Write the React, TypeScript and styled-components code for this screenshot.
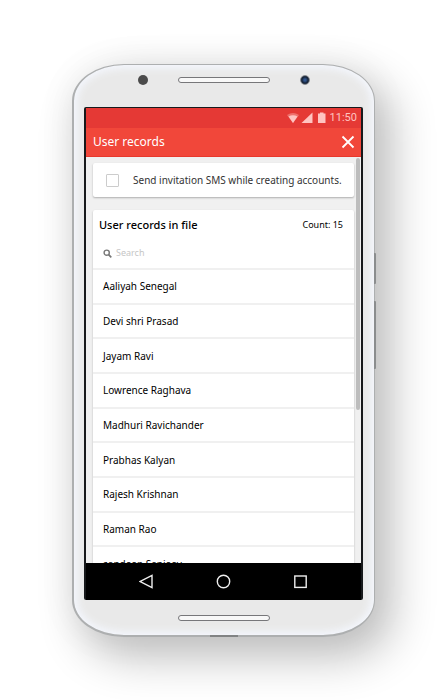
import React from "react";
import styled, { createGlobalStyle } from "styled-components";

const GlobalStyle = createGlobalStyle`
  *, *::before, *::after { box-sizing: border-box; }
  body {
    margin: 0;
    background: #fff;
    font-family: "Noto Sans", "Open Sans", sans-serif;
  }
  button, input { font: inherit; }
`;

const Stage = styled.main`
  min-height: 100vh;
  padding: 64px 73px 63px 72px;
  overflow: hidden;
`;

const Phone = styled.div`
  position: relative;
  display: flex;
  flex-direction: column;
  height: calc(100vh - 127px);
  min-height: 400px;
  padding: 0 11px 0 10px;
  border: 2px solid #adafb0;
  border-width: 1px 1px 2px 2px;
  border-radius: 52px / 37px;
  background: #e9e9e9;
  box-shadow:
    inset 0 0 9px 3px #f5f8ff,
    14px 18px 44px 4px rgba(0, 0, 0, 0.24),
    0 0 40px rgba(0, 0, 0, 0.05);
`;

const SideButton = styled.span<{ $top: number; $height: number }>`
  position: absolute;
  right: -2px;
  top: ${({ $top }) => $top}px;
  width: 2px;
  height: ${({ $height }) => $height}px;
  border-radius: 0 1px 1px 0;
  background: #8b8d8e;
`;

const Port = styled.span`
  position: absolute;
  bottom: -2px;
  left: 50%;
  width: 28px;
  height: 2px;
  margin-left: -14px;
  background: #818384;
`;

const TopBezel = styled.div`
  display: flex;
  flex: none;
  align-items: center;
  justify-content: center;
  gap: 30px;
  height: 42px;
  padding-bottom: 12px;
`;

const BottomBezel = styled(TopBezel)`
  height: 35px;
  padding: 0;
`;

const Grille = styled.span`
  width: 92px;
  height: 6px;
  border: 1px solid #77777a;
  border-radius: 3px;
  background: #f8f8f8;
`;

const Sensor = styled.span`
  width: 10px;
  height: 10px;
  border-radius: 50%;
  background: #4b4b4b;
`;

const Camera = styled(Sensor)`
  border: 1px solid #85888d;
  background: radial-gradient(circle, #31558c 0 1px, #16253c 3px, #333a44 5px);
`;

const Screen = styled.div`
  display: flex;
  flex: 1;
  flex-direction: column;
  min-height: 0;
  border: 2px solid #17191b;
  border-width: 1px 2px 0;
  border-radius: 2px;
  overflow: hidden;
  background: #f0f0f0;
`;

const StatusBar = styled.div`
  display: flex;
  flex: none;
  align-items: center;
  justify-content: flex-end;
  height: 20px;
  padding-right: 4px;
  background: #e53935;
  color: #ffc4c1;
  font: 11px/20px Roboto, sans-serif;
`;

const StatusIcons = styled.svg`
  width: 40px;
  height: 12px;
  margin-right: 3px;
`;

const Header = styled.header`
  display: flex;
  flex: none;
  align-items: center;
  justify-content: space-between;
  height: 29px;
  padding: 0 6px 0 7px;
  border-bottom: 1px solid #e8382c;
  background: #f1473a;
  color: #fff;
`;

const Title = styled.h1`
  margin: 0;
  font-size: 12px;
  font-weight: 400;
  line-height: 16px;
`;

const IconButton = styled.button`
  display: flex;
  padding: 0;
  border: 0;
  background: none;
  color: inherit;
  cursor: pointer;
`;

const Viewport = styled.div`
  position: relative;
  flex: 1;
  min-height: 0;
  overflow: hidden;
  padding: 6px 7px 0;
`;

const ScrollThumb = styled.span`
  position: absolute;
  top: 1px;
  right: 1px;
  width: 4px;
  height: 62%;
  border-radius: 2px;
  background: #bdbdbd;
`;

const Card = styled.section`
  border-radius: 2px;
  background: #fff;
  box-shadow: 0 1px 2px rgba(0, 0, 0, 0.28);
`;

const InviteCard = styled(Card)`
  margin-bottom: 13px;
`;

const InviteOption = styled.label`
  display: flex;
  align-items: center;
  gap: 14px;
  height: 34px;
  padding: 0 10px 0 13px;
  color: #333;
  font-size: 10px;
  white-space: nowrap;
`;

const Checkbox = styled.input`
  flex: none;
  appearance: none;
  width: 13px;
  height: 13px;
  margin: 0;
  border: 1px solid #ccc;
  border-radius: 1px;
  background: #fff;

  &:checked {
    background: #f1473a;
  }
`;

const CardHead = styled.div`
  display: flex;
  align-items: center;
  justify-content: space-between;
  height: 28px;
  padding: 0 11px 0 6px;
`;

const CardTitle = styled.h2`
  margin: 0;
  color: #000;
  font-size: 11px;
  font-weight: 500;
`;

const Count = styled.span`
  color: #000;
  font-size: 9px;
`;

const SearchRow = styled.label`
  display: flex;
  align-items: center;
  gap: 4px;
  height: 30px;
  padding: 0 10px;
  color: #777;
`;

const SearchInput = styled.input`
  flex: 1;
  min-width: 0;
  padding: 0;
  border: 0;
  outline: 0;
  background: none;
  color: #111;
  font-size: 9px;
  line-height: 12px;

  &::placeholder {
    color: #c6c6c6;
    opacity: 1;
  }
`;

const RecordList = styled.ul`
  display: grid;
  grid-auto-rows: 1fr;
  height: 312px;
  margin: 0;
  padding: 0;
  list-style: none;
`;

const Record = styled.li`
  display: flex;
  align-items: center;
  padding: 0 10px;
  border-top: 2px solid #f0f0f0;
  color: #000;
  font-size: 10px;
`;

const NavBar = styled.nav`
  display: flex;
  flex: none;
  align-items: center;
  justify-content: center;
  gap: 62px;
  height: 37px;
  background: #000;
  color: #eee;
`;

const records = [
  "Aaliyah Senegal",
  "Devi shri Prasad",
  "Jayam Ravi",
  "Lowrence Raghava",
  "Madhuri Ravichander",
  "Prabhas Kalyan",
  "Rajesh Krishnan",
  "Raman Rao",
  "sandeep Sanjeev",
];

const NavIcon = ({ children }: { children: React.ReactNode }) => (
  <svg width="15" height="15" viewBox="0 0 15 15" fill="none" stroke="currentColor" strokeWidth="1.4">
    {children}
  </svg>
);

export default function App() {
  return (
    <>
      <GlobalStyle />
      <Stage>
        <Phone>
          <SideButton $top={188} $height={31} />
          <SideButton $top={236} $height={68} />
          <Port />
          <TopBezel>
            <Sensor />
            <Grille />
            <Camera />
          </TopBezel>
          <Screen>
            <StatusBar>
              <StatusIcons viewBox="0 0 40 12" fill="currentColor" aria-hidden="true">
                <path d="M0 3Q6 -1 12 3L6 11Z" opacity=".4" />
                <path d="M1.5 4.5Q6 2 10.5 4.5L6 11Z" />
                <path d="M14.500 11L25.500 0.500V11Z" />
                <path d="M31 1.500H33V0.500H36.500V1.500H38.500V11H31Z" />
              </StatusIcons>
              <span>11:50</span>
            </StatusBar>
            <Header>
              <Title>User records</Title>
              <IconButton type="button" aria-label="Close">
                <svg width="14" height="14" viewBox="0 0 14 14" fill="none" stroke="currentColor" strokeWidth="1.8">
                  <path d="M1.500 1.500L12.500 12.500M12.500 1.500L1.500 12.500" />
                </svg>
              </IconButton>
            </Header>
            <Viewport>
              <InviteCard>
                <InviteOption>
                  <Checkbox type="checkbox" />
                  Send invitation SMS while creating accounts.
                </InviteOption>
              </InviteCard>
              <Card>
                <CardHead>
                  <CardTitle>User records in file</CardTitle>
                  <Count>Count: 15</Count>
                </CardHead>
                <SearchRow>
                  <svg width="9" height="9" viewBox="0 0 9 9" fill="none" stroke="currentColor" strokeWidth="1.4" aria-hidden="true">
                    <circle cx="3.700" cy="3.700" r="2.600" />
                    <path d="M5.600 5.600L8.300 8.300" strokeWidth="1.7" />
                  </svg>
                  <SearchInput type="search" placeholder="Search" aria-label="Search" />
                </SearchRow>
                <RecordList>
                  {records.map((name) => (
                    <Record key={name}>{name}</Record>
                  ))}
                </RecordList>
              </Card>
              <ScrollThumb />
            </Viewport>
            <NavBar>
              <IconButton type="button" aria-label="Back">
                <NavIcon>
                  <path d="M13 1.300V13.700L1.200 7.500Z" />
                </NavIcon>
              </IconButton>
              <IconButton type="button" aria-label="Home">
                <NavIcon>
                  <circle cx="7.500" cy="7.500" r="6.200" />
                </NavIcon>
              </IconButton>
              <IconButton type="button" aria-label="Recent apps">
                <NavIcon>
                  <rect x="1.800" y="2" width="11.400" height="11.400" />
                </NavIcon>
              </IconButton>
            </NavBar>
          </Screen>
          <BottomBezel>
            <Grille />
          </BottomBezel>
        </Phone>
      </Stage>
    </>
  );
}
